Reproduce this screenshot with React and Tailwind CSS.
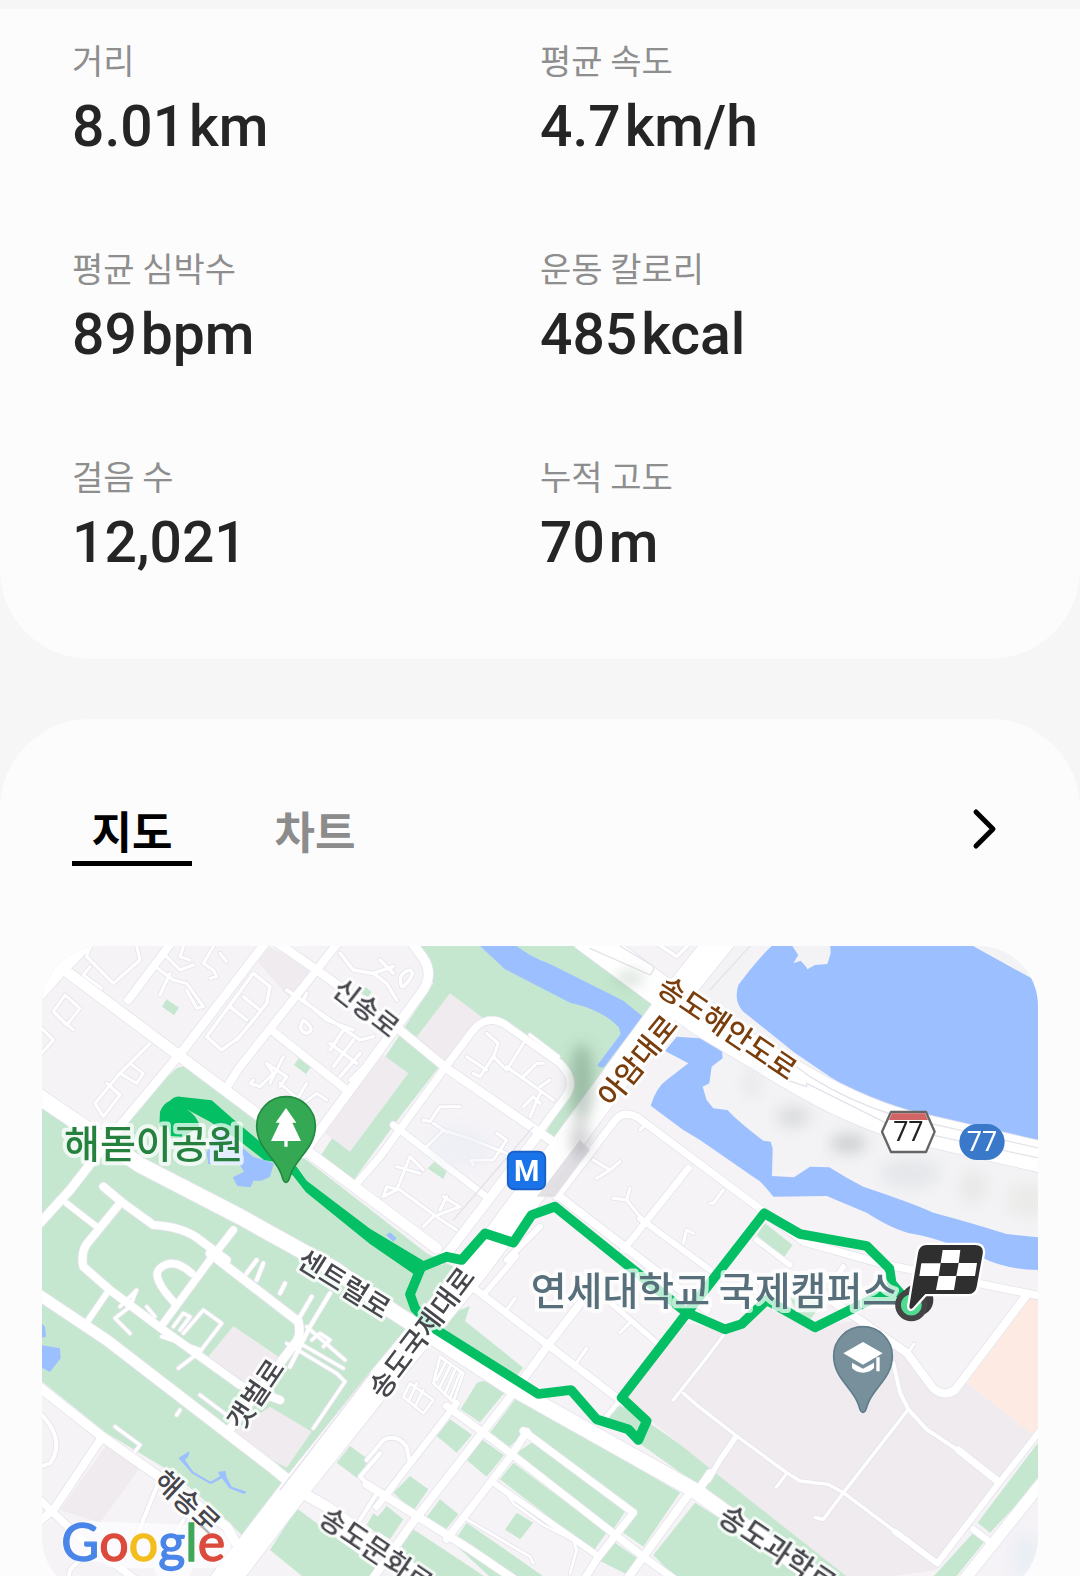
import React, { useState } from "react";

const FONT = "font-['Noto_Sans_CJK_KR','Noto_Sans',sans-serif]";

const STATS = [
  { label: "거리", value: "8.01", unit: "km" },
  { label: "평균 속도", value: "4.7", unit: "km/h" },
  { label: "평균 심박수", value: "89", unit: "bpm" },
  { label: "운동 칼로리", value: "485", unit: "kcal" },
  { label: "걸음 수", value: "12,021", unit: "" },
  { label: "누적 고도", value: "70", unit: "m" },
];

/* Parks and lawns */
const GREEN = [
  "M0 500L170 600L410 385Q430 375 445 385L1160 940L1260 990L960 1360L730 1650L620 1800L560 1740L400 1600L200 1480L0 1320Z",
  "M1120 18L1640 18L1850 170L1810 240L1540 605L1510 590L1595 440L1570 380L1380 245L1320 240L1190 390L1080 530L930 735L840 650L1180 130Z",
  "M366 200L380 178L417 203L402 226Z",
  "M762 375L776 355L812 382L798 402Z",
  "M960 160L975 140L995 155L985 170Z",
  "M1163 685L1183 665L1222 690L1210 717Z",
  "M1290 1098L1275 1143L1450 1283L1430 1308L1160 1150Z",
  "M1262 1408L1310 1330Q1330 1312 1390 1345L1392 1360L1320 1447Z",
  "M1230 1438L1296 1484L1250 1538L1190 1488Z",
  "M1325 1498L1392 1546L1340 1610L1280 1560Z",
  "M1110 1608L1165 1648L1120 1713L1060 1658Z",
  "M1200 1678L1255 1723L1210 1778L1155 1738Z",
  "M1040 1698L1090 1738L1050 1798L990 1758Z",
  "M1120 1768L1350 1920L1330 1980L1150 1980L1085 1818Z",
  "M1280 1748L1540 1930L1500 1980L1370 1930L1240 1808Z",
  "M1430 1718L1480 1748L1440 1798L1395 1769Z",
  "M1420 1568L1700 1778L1660 1833L1380 1618Z",
  "M1430 1372L1920 1658L1810 1820L1750 1778L1780 1708L1460 1473L1400 1528L1350 1478Z",
  "M1490 1498L1760 1708L1720 1768L1430 1538Z",
  "M1725 1808L1790 1853L1760 1903L1680 1863Z",
  "M1965 1688L2310 1908L2400 1990L1980 1990L1840 1845Z",
  "M1740 1388L2000 1568L2450 1930L2330 1910L1960 1625L1690 1433Z",
  "M3000 1500L3000 1620L2850 1778L2813 1748Z",
  "M2800 1778L2835 1803L2740 1920L2680 1910Z",
  "M2175 850L2258 915L2230 955L2150 885Z",
  "M930 1518L988 1560L950 1613L890 1568Z",
  "M770 1705L1020 1890L960 1980L850 1960L690 1830Z",
  "M1000 1720L1040 1750L1010 1780L980 1755Z",
  "M2250 1070L2350 1085L2310 1140L2270 1120Z",
];

/* Built-up blocks, drawn darker than the base land */
const BLOCKS = [
  "M650 62L690 22L825 85L745 170Z",
  "M1030 345L1105 400L930 635L850 575Z",
  "M1230 160L1330 235L1215 365L1130 290Z",
  "M580 1158L720 1253L640 1348L505 1250Z",
  "M690 1400L815 1475L740 1583L560 1488Z",
  "M205 1508L300 1583L180 1748L60 1710Z",
  "M1930 1148L1745 1375L1830 1440L1990 1570L2440 1925L2690 1890L2870 1640L2990 1490L2780 1330L2700 1350L2620 1260L2460 1140L2310 1160L2170 1080L2060 1170Z",
];

const WATER = [
  "M1320 18L1430 18Q1470 50 1530 72L1750 182L1815 235L1790 288L1760 292L1695 378Q1685 388 1672 376L1742 282L1736 262Q1690 210 1590 188L1395 88Z",
  "M1910 290L1980 295L2045 320L2048 355L2015 380L2008 430L1988 440L2000 480L2020 505L2062 510Q2100 550 2170 602L2192 605L2198 625L2196 708L2262 712L2310 680L2368 682Q2420 715 2470 740Q2620 790 2680 818Q2800 850 2900 882L3000 892L3000 990Q2900 990 2820 950Q2700 895 2620 882Q2560 870 2480 818L2360 768L2200 770Q2160 720 2150 718L1980 600L1930 570L1832 497Q1850 440 1880 420L1945 370L1875 333Z",
  "M2195 18Q2150 60 2095 135Q2080 185 2110 215L2260 335Q2340 390 2400 430Q2480 480 2560 507L2680 545Q2850 580 3000 605L3000 130L2970 112L2880 62L2800 18Z",
  "M500 640L530 560Q560 560 590 610L640 650L702 670L690 710L665 722L640 722L632 742L592 738L578 712L612 695L600 675L505 672Z",
  "M0 1145L15 1160L18 1190L0 1195ZM0 1215L60 1225L62 1255L30 1296L0 1280Z",
  "M415 1555L448 1533L446 1548L435 1560L460 1595L512 1625L540 1608L534 1596L556 1592L560 1612L575 1640L620 1655L612 1662L568 1645L546 1615L512 1633L455 1600L428 1568Z",
  "M1038 885L1050 877L1070 895L1060 905Z",
];

/* Streets as [width, path] */
const ROADS = [
  [40, "M-10 170L60 90L150 0"],
  [32, "M60 80L1190 925"],
  [24, "M265 180L400 0"],
  [26, "M-10 860L90 750L250 545L430 330L690 -10"],
  [24, "M555 450L600 380L830 90L900 0"],
  [24, "M700 275L920 450"],
  [26, "M700 0L830 90L1080 270L1220 385L1560 620"],
  [28, "M1110 0L1150 55Q1180 100 1150 150L1000 355L790 640"],
  [22, "M950 730L1020 650L1210 390L1300 270Q1340 225 1390 250L1560 370Q1610 420 1580 465L1480 600"],
  [20, "M1060 555L1345 775"],
  [28, "M1490 590L1230 930L1200 960"],
  [92, "M1640 -10L1870 160L1990 245L2240 395Q2440 515 2600 558L3020 655"],
  [84, "M2090 -60L1890 190L1560 640L1300 990L1010 1340L770 1640L510 1980"],
  [22, "M1550 770L1730 535Q1752 513 1790 530L2165 810L2290 905L2520 970L3010 1070"],
  [20, "M1945 685L1750 930"],
  [18, "M1800 835L2010 990"],
  [24, "M1520 740L2000 1110"],
  [18, "M1400 960L1500 860"],
  [46, "M-10 465L130 560L300 675L600 830L880 985L1060 1115L1200 1205L1400 1335L1590 1442L1970 1655L2420 1980"],
  [22, "M1280 1028L1750 1388"],
  [16, "M1430 948L1330 1065"],
  [16, "M1620 1008L1850 1208"],
  [24, "M1630 1078L1530 1208L1420 1358L1110 1758L960 1970"],
  [14, "M1745 1375L1690 1440"],
  [10, "M1740 1178L1770 1148M1610 1268L1640 1225M1400 1110L1425 1075"],
  [22, "M1220 1398L1360 1500L1820 1858L1920 1930"],
  [24, "M980 1633L1290 1828L1440 1930"],
  [22, "M1460 1475L1415 1545L1220 1798"],
  [22, "M1450 1473L1780 1718L1670 1858L1600 1970"],
  [18, "M1360 1628L1670 1845"],
  [24, "M1950 1658L1730 1960"],
  [8, "M1280 1738L1470 1850L1480 1870M1400 1660L1420 1690L1510 1755L1600 1800L1610 1830L1590 1900"],
  [12, "M1050 1658L1110 1568L1100 1520Q1070 1480 1030 1500L980 1560"],
  [20, "M1250 1390L1010 1700"],
  [24, "M1970 1658L2010 1600"],
  [24, "M2370 1078L2600 1238L2680 1345Q2710 1372 2745 1350L2960 1065"],
  [12, "M2560 1268L2580 1358L2605 1408L2660 1468L2760 1535"],
  [22, "M2755 1530L2875 1625"],
  [10, "M2605 1408L2410 1658L2350 1738L2325 1732"],
  [10, "M1930 1360L1980 1403L2090 1488L2240 1598L2280 1623L2365 1633L2410 1658L2570 1778"],
  [18, "M2565 1775L2692 1870L2870 1638L3010 1460"],
  [16, "M2005 1620L2040 1560L2088 1490"],
  [9, "M2238 1603L2208 1643M2055 1180L1975 1285M1900 1380L2010 1240M2605 1238L2622 1212"],
  [34, "M3020 1610L2740 1960"],
  [20, "M2800 1768L2840 1798"],
  [16, "M2370 1040L2410 980M2150 900L2250 975"],
  [32, "M-10 1060L200 1200L700 1585L790 1660L860 1700L1000 1800L1180 1930"],
  [28, "M-10 1335L190 1493L350 1605L560 1760L600 1830L500 1960"],
  [24, "M185 1493L40 1710L-10 1750"],
  [22, "M0 1680L110 1785L340 1960"],
  [24, "M190 740L250 790L340 855Q430 860 480 900L560 960"],
  [24, "M240 790L150 900Q120 930 130 980L210 1050L370 1170L600 1335L720 1380"],
  [18, "M80 790L170 860M200 1060L135 1155"],
  [22, "M580 870L510 960L370 1150"],
  [22, "M405 1090Q330 1010 360 985Q400 950 455 1000"],
  [26, "M510 940L775 1145Q785 1190 765 1210L560 1480"],
  [12, "M870 1060L810 1160L750 1280M620 1000L650 960M650 1020L670 970M720 1060L735 1030M780 1130L815 1070"],
  [10, "M740 1210L890 1300L915 1325L820 1465M780 1210L910 1285M800 1160L915 1260M815 1200L840 1180L870 1200L850 1220"],
  [10, "M240 1100L290 1050L270 1100L225 1135L270 1180M320 1100L345 1130M400 1160L430 1120L450 1130L420 1170M430 1180L490 1110L545 1150L480 1235L415 1285M365 1190L485 1230"],
  [10, "M225 1460L300 1515L285 1535M480 1365L560 1425M410 1425L420 1410"],
  [12, "M0 1420Q80 1500 30 1570L0 1580M350 1640L290 1790M1020 1540L960 1610L1010 1660L960 1740M80 1950L90 1890L150 1830M430 1740L400 1790"],
  [9, "M140 50L150 20M140 50L220 130L300 60L290 18M150 80L130 105L185 145M140 50L170 80M390 100L360 165M340 75L400 120L440 130L490 200L470 205L440 150M380 50L420 90L460 75M430 20L420 50L450 60M520 20L490 70L520 90L530 110L510 115M540 40L560 65"],
  [9, "M40 215L75 165L120 205L80 255L40 215L100 270M0 260L40 300L0 345M200 430L240 465L190 530L165 490L240 400L330 310M270 370L310 400L290 430L240 400"],
  [10, "M500 290L640 100L690 140L680 190L640 240L590 300M500 290L545 330L600 290M570 200L620 240M610 170L660 210"],
  [10, "M740 150L960 300L1000 290M800 160L790 180L860 240L940 270M790 240Q770 270 800 280Q830 270 790 240M910 270L870 330M940 300L880 380M960 340L900 410M970 380L930 420M870 310L950 370"],
  [9, "M640 420L630 430L660 440L700 400L680 370L740 410L720 440M730 350L690 430M720 430L790 490L830 460L860 480M800 430L770 480"],
  [10, "M900 40L940 90L1000 100L1060 80M1000 100L1040 130L1070 180M1020 60L1060 100M1085 140Q1070 100 1110 90Q1130 100 1090 140"],
  [9, "M1340 280L1375 310L1360 350L1400 390L1450 310M1360 350L1320 410L1300 400M1280 350L1340 390M1400 380L1540 480M1450 410L1490 370L1510 370M1500 440L1530 420M1500 460L1470 530M1450 500L1480 470L1500 490"],
  [9, "M1150 540L1170 545L1200 500L1260 500M1180 550L1210 570L1160 620M1210 570L1300 600L1400 640M1370 580L1400 600L1360 660L1290 660L1300 675M1215 575L1240 580"],
  [9, "M1070 680L1140 700M1110 650L1070 750L1030 770L1040 740L1080 750L1190 830L1250 870M1110 650L1150 690M1210 770L1260 800L1180 830L1150 860M1220 770L1200 810"],
  [9, "M1660 660L1710 690L1740 665M1710 690L1670 715M1720 775L1760 780L1770 745M1760 780L1800 830M1800 570L1810 560M1930 910L1940 870L1960 880M2050 750L2020 790L2010 790"],
  [8, "M1200 1250L1270 1300L1240 1385L1180 1330ZM1215 1270L1190 1320M1230 1280L1200 1340M1245 1290L1215 1360M1260 1300L1230 1375M1110 1330L1180 1380L1150 1420L1090 1370ZM1130 1330L1105 1385M1150 1350L1125 1400"],
  [10, "M1700 40L1840 90M1470 285L1555 350L1545 360M1850 10L1910 50L1960 0"],
];

const ROUTE = [
  "M2615 1100L2555 1030L2548 985L2480 918L2280 882L2173 820L1940 1120L1745 1373L1820 1443L1795 1500L1765 1468L1670 1438L1593 1350L1495 1362L1190 1170L1125 1105L1110 1063L1142 985",
  "M1135 985L1220 950L1265 960L1335 880L1420 908L1475 825L1545 800L1940 1118L2055 1168L2105 1152L2180 1080L2325 1162L2515 1068L2600 1080",
];

/* Street names: [text, x, y, angle, size] */
const STREETS = [
  ["신송로", 978, 205, 38, 81],
  ["센트럴로", 912, 1032, 32, 84],
  ["송도국제대로", 1145, 1178, -53, 84],
  ["갯벌로", 647, 1363, -56, 84],
  ["해송로", 442, 1686, 43, 84],
  ["송도문화로", 1008, 1832, 34, 84],
  ["송도과학로", 2212, 1830, 34, 87],
];
const HIGHWAYS = [
  ["아암대로", 1793, 362, -51, 87],
  ["송도해안도로", 2062, 264, 34, 87],
];

function Pin({ x, y, fill, stroke, children }) {
  return (
    <g transform={`translate(${x} ${y})`}>
      <path
        d="M0 169C-10 169 -9 156 -15 142C-34 94 -88 64 -88 0A88 88 0 0 1 88 0C88 64 34 94 15 142C9 156 10 169 0 169Z"
        fill={fill}
        stroke={stroke}
        strokeWidth="5"
      />
      {children}
    </g>
  );
}

function StreetName({ item, fill }) {
  const [text, x, y, angle, size] = item;
  return (
    <text
      transform={`translate(${x} ${y}) rotate(${angle})`}
      y={Math.round(size * 0.36)}
      textAnchor="middle"
      fontSize={size}
      fontWeight="500"
      fill={fill}
      stroke="#ffffff"
      strokeOpacity="0.8"
      strokeWidth="18"
      strokeLinejoin="round"
      paintOrder="stroke"
    >
      {text}
    </text>
  );
}

function RouteMap() {
  return (
    <svg
      viewBox="6 18 2988 1953"
      className={`block w-full rounded-[60px] ${FONT}`}
      role="img"
      aria-label="운동 경로 지도"
    >
      <defs>
        <filter id="soft" x="-50%" y="-50%" width="200%" height="200%">
          <feGaussianBlur stdDeviation="20" />
        </filter>
      </defs>
      <rect x="0" y="0" width="3000" height="2000" fill="#f6f3f7" />
      <path d="M2160 0L2095 135L2120 230L2960 620L3000 640L3000 895L2700 830L2370 680L2200 700L2040 540L2000 420L1900 250L2060 30Z" fill="#f3f3f5" />
      {GREEN.map((d) => <path key={d} d={d} fill="#c6e7cf" />)}
      {BLOCKS.map((d) => <path key={d} d={d} fill="#efebef" />)}
      <path d="M2960 1075L3000 1060L3000 1480L2970 1478L2782 1328Z" fill="#fdeae3" />
      {WATER.map((d) => <path key={d} d={d} fill="#9cc0ff" />)}
      <path d="M2245 0L2275 45L2260 70L2282 62L2298 80L2302 88L2325 75L2362 72L2372 40L2370 0Z" fill="#f3f3f5" />
      <path d="M2800 18L2970 112L3000 140L3000 0Z" fill="#f3f3f5" />
      <g fill="none" strokeLinecap="round" strokeLinejoin="round">
        {ROADS.map(([w, d]) => <path key={d} d={d} stroke="#e6e4ec" strokeWidth={w + 5} />)}
        {ROADS.map(([w, d]) => <path key={d} d={d} stroke="#ffffff" strokeWidth={w} />)}
        <path d="M1650 25L1830 105Q1850 85 1835 75L1740 18M2250 365L2310 410Q2430 485 2560 525L3000 625M2240 420L2300 440L2300 430L2560 560L3000 655M2010 150L2130 18M720 1650L990 1300M1240 840L1480 560" stroke="#e4e2ea" strokeWidth="4" />
      </g>
      <path d="M1490 770L1620 600L1650 630L1545 770Z" fill="#dcdade" opacity="0.8" />
      <g filter="url(#soft)">
        <ellipse cx="1625" cy="430" rx="36" ry="120" fill="#4c6b56" opacity="0.34" />
        <ellipse cx="1620" cy="600" rx="30" ry="54" fill="#6b6b70" opacity="0.3" />
        <ellipse cx="1770" cy="115" rx="45" ry="24" fill="#6d8d77" opacity="0.24" />
        <ellipse cx="2260" cy="530" rx="50" ry="30" fill="#c9cccf" opacity="0.6" />
        <ellipse cx="2425" cy="610" rx="55" ry="30" fill="#b9bcbf" opacity="0.6" />
        <ellipse cx="2610" cy="700" rx="90" ry="45" fill="#dce0e2" opacity="0.6" />
        <ellipse cx="2800" cy="740" rx="40" ry="50" fill="#e4e4e4" opacity="0.7" />
        <ellipse cx="2960" cy="780" rx="60" ry="50" fill="#e8e8e6" opacity="0.8" />
        <ellipse cx="2135" cy="430" rx="25" ry="40" fill="#e2e4e6" opacity="0.7" />
        <ellipse cx="1260" cy="620" rx="90" ry="60" fill="#e9eff4" opacity="0.6" />
        <ellipse cx="2960" cy="1850" rx="50" ry="70" fill="#e9eef4" opacity="0.9" />
      </g>

      <g fill="none" stroke="#04bf63" strokeWidth="29" strokeLinejoin="round" strokeLinecap="round">
        {ROUTE.map((d) => <path key={d} d={d} />)}
      </g>
      <path
        d="M360 515Q370 490 390 482Q405 468 420 470L515 481L580 538L690 630L745 668L770 680L800 722L990 866L1150 962L1150 1000L1125 1005L990 912L798 757L760 708L700 665L672 660L600 604L510 545L440 508Q475 530 478 560L430 590L390 588L385 560L358 560Z"
        fill="#04bf63"
      />

      {STREETS.map((s) => <StreetName key={s[0]} item={s} fill="#46464d" />)}
      {HIGHWAYS.map((s) => <StreetName key={s[0]} item={s} fill="#7a3d0c" />)}

      <g stroke="#ffffff" strokeOpacity="0.72" strokeWidth="24" strokeLinejoin="round" paintOrder="stroke" fontWeight="500">
        <text x="72" y="654" fontSize="117" fill="#26813f">해돋이공원</text>
        <text x="1472" y="1096" fontSize="117" fill="#566f7b">연세대학교 국제캠퍼스</text>
      </g>

      <Pin x={738} y={558} fill="#34a853" stroke="#208a40">
        <path d="M0 -54L31 -10H19L45 45H5V62H-5V45H-45L-19 -10H-31Z" fill="#ffffff" />
      </Pin>
      <Pin x={2469} y={1248} fill="#78909c" stroke="#607d8b">
        <path d="M0 -42L59 -8L0 26L-59 -8ZM-33 20L0 38L33 20V36Q20 50 0 50Q-20 50 -33 36ZM40 4H50V46H40Z" fill="#ffffff" />
      </Pin>

      <rect x="1403" y="635" width="113" height="113" rx="20" fill="#1a73e8" stroke="#175fc4" strokeWidth="5" />
      <text x="1460" y="722" textAnchor="middle" fontSize="87" fontWeight="700" fill="#ffffff" className="font-['Roboto',sans-serif]">M</text>

      <path d="M2526 575L2553 516H2658L2684 575L2658 636H2553Z" fill="#ffffff" stroke="#656565" strokeWidth="7" strokeLinejoin="round" />
      <path d="M2556 520H2655L2664 540H2547Z" fill="#d16565" />
      <text x="2605" y="604" textAnchor="middle" fontSize="81" fill="#222222" className="font-['Roboto',sans-serif]">77</text>
      <rect x="2758" y="552" width="136" height="108" rx="54" fill="#3a78c9" />
      <text x="2826" y="634" textAnchor="middle" fontSize="81" fill="#ffffff" className="font-['Roboto',sans-serif]">77</text>

      <circle cx="2632" cy="1080" r="48" fill="#3c3c3c" />
      <circle cx="2614" cy="1095" r="40" fill="#4fdb91" stroke="#444444" strokeWidth="17" />
      <path
        d="M2660 915H2805Q2832 915 2828 942L2810 1040Q2806 1062 2784 1062H2656L2618 1104Q2608 1112 2608 1098L2634 940Q2638 915 2660 915Z"
        fill="#2f2f2f"
        stroke="#ffffff"
        strokeWidth="14"
        strokeLinejoin="round"
        paintOrder="stroke"
      />
      <path d="M2708 930H2761L2756 969H2702ZM2644 970H2702L2696 1008H2638ZM2756 969H2811L2805 1008H2749ZM2696 1008H2749L2742 1050H2688Z" fill="#ffffff" />

      <path d="M125 1803L470 1815M230 1825H515M400 1860V1870" fill="none" stroke="#ffffff" strokeOpacity="0.6" strokeWidth="120" strokeLinecap="round" strokeLinejoin="round" />
      <text x="64" y="1862" fontSize="156" strokeWidth="4" strokeLinejoin="round" className="font-['Lato',sans-serif]">
        <tspan fill="#4a86e8" stroke="#4a86e8">G</tspan>
        <tspan fill="#db4a3d" stroke="#db4a3d">o</tspan>
        <tspan fill="#f3bd1c" stroke="#f3bd1c">o</tspan>
        <tspan fill="#4a86e8" stroke="#4a86e8">g</tspan>
        <tspan fill="#3fa757" stroke="#3fa757">l</tspan>
        <tspan fill="#db4a3d" stroke="#db4a3d">e</tspan>
      </text>
    </svg>
  );
}

export default function App() {
  const [tab, setTab] = useState("지도");
  return (
    <main className={`flex h-screen flex-col gap-[60px] overflow-hidden bg-[#f6f6f6] pt-[9px] ${FONT}`}>
      <section className="shrink-0 rounded-b-[90px] bg-[#fcfcfc] px-[72px] pt-7 pb-20">
        <dl className="grid grid-cols-2 gap-y-[82px]">
          {STATS.map((s) => (
            <div key={s.label}>
              <dt className="text-[34px] leading-[46px] text-[#8e8e8e]">{s.label}</dt>
              <dd className="flex items-baseline gap-1 pt-2 font-['Roboto','Noto_Sans_CJK_KR',sans-serif] text-[57px] leading-[72px] font-medium text-[#252525]">
                <span>{s.value}</span>
                {s.unit && <span>{s.unit}</span>}
              </dd>
            </div>
          ))}
        </dl>
      </section>

      <section className="shrink-0 rounded-t-[90px] bg-[#fcfcfc] px-[42px] pt-[72px] pb-10">
        <div className="flex items-center justify-between px-[30px] pb-20">
          <div role="tablist" className="flex gap-[63px]">
            {["지도", "차트"].map((name) => (
              <button
                key={name}
                type="button"
                role="tab"
                aria-selected={tab === name}
                onClick={() => setTab(name)}
                className={
                  "h-[75px] w-[120px] border-b-[5px] pt-2 text-[44px] leading-[62px] font-bold " +
                  (tab === name ? "border-black text-black" : "border-transparent text-[#8c8c8c]")
                }
              >
                {name}
              </button>
            ))}
          </div>
          <button type="button" aria-label="자세히" className="flex h-12 w-12 items-center justify-center">
            <svg viewBox="0 0 48 48" className="h-12 w-12" fill="none" stroke="#000000" strokeWidth="5" strokeLinecap="round" strokeLinejoin="round">
              <path d="M16 7L33 24L16 41" />
            </svg>
          </button>
        </div>
        <RouteMap />
      </section>
    </main>
  );
}
